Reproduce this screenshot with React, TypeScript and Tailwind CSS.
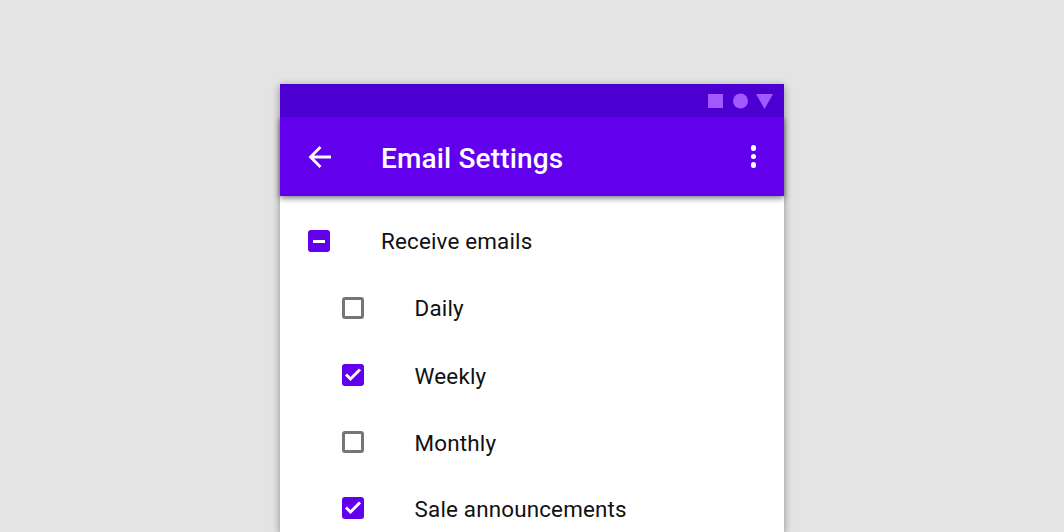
const StatusIcons = () => (
  <svg width="66" height="16" viewBox="0 0 66 16" className="fill-[#a259ff]">
    <rect x="0" y="1" width="15" height="14" />
    <circle cx="32.5" cy="8" r="7.5" />
    <path d="M48 1h17l-8.500 15z" />
  </svg>
);

function Checkbox({ state }: { state: 'on' | 'off' | 'mixed' }) {
  if (state === 'off') {
    return <span className="box-border block h-[22px] w-[22px] shrink-0 rounded-[3px] border-[3px] border-[#757575]" />;
  }
  return (
    <span className="flex h-[22px] w-[22px] shrink-0 items-center justify-center rounded-[3px] bg-[#6200ee]">
      {state === 'on' ? (
        <svg width="22" height="22" viewBox="0 0 22 22" fill="none" stroke="white" strokeWidth="2.900">
          <path d="M4 10.500l4.500 4.500 9.500-9.500" />
        </svg>
      ) : (
        <span className="block h-[3px] w-[12px] bg-white" />
      )}
    </span>
  );
}

const rows = [
  { label: 'Daily', state: 'off' as const, h: 'h-[67px]', text: 'pt-[2px]' },
  { label: 'Weekly', state: 'on' as const, h: 'h-[67px]', text: 'pt-[4px]' },
  { label: 'Monthly', state: 'off' as const, h: 'h-[67px]', text: 'pt-[4px]' },
  { label: 'Sale announcements', state: 'on' as const, h: 'h-[66px]', text: 'pt-[4px]' },
];

export default function App() {
  return (
    <div className="flex h-[532px] justify-center overflow-hidden bg-[#e4e4e4] pt-[84px] font-['Roboto',sans-serif]">
      <div className="h-[448px] w-[504px] bg-white shadow-[0_2px_8px_rgba(0,0,0,0.4)]">
        <div className="relative z-10 flex h-[33px] items-center justify-end bg-[#4b00d1] pr-[10px]">
          <StatusIcons />
        </div>
        <header className="flex h-[79px] items-center bg-[#6200ee] pl-[28px] pr-[28px] text-white shadow-[0_2px_6px_rgba(0,0,0,0.55)]">
          <svg width="24" height="24" viewBox="0 0 24 24" fill="none" stroke="white" strokeWidth="2.800" className="shrink-0">
            <path d="M23 12H2.500M12.500 2L2.500 12l10 10" />
          </svg>
          <h1 className="ml-[49px] flex-1 pt-[5px] text-[28px] leading-none font-medium tracking-[0.15px]">Email Settings</h1>
          <span className="flex flex-col gap-[2.800px]">
            <span className="h-[5.500px] w-[5.500px] rounded-full bg-white" />
            <span className="h-[5.500px] w-[5.500px] rounded-full bg-white" />
            <span className="h-[5.500px] w-[5.500px] rounded-full bg-white" />
          </span>
        </header>
        <ul className="text-[22.400px] font-[380] tracking-[0.17px] text-[#111111]">
          <li className="flex h-[78px] items-center pl-[28px] pt-[12px]">
            <Checkbox state="mixed" />
            <span className="ml-[51px] pt-[2px]">Receive emails</span>
          </li>
          {rows.map((row) => (
            <li key={row.label} className={`flex items-center pl-[62px] ${row.h}`}>
              <Checkbox state={row.state} />
              <span className={`ml-[50.600px] ${row.text}`}>{row.label}</span>
            </li>
          ))}
        </ul>
      </div>
    </div>
  );
}
